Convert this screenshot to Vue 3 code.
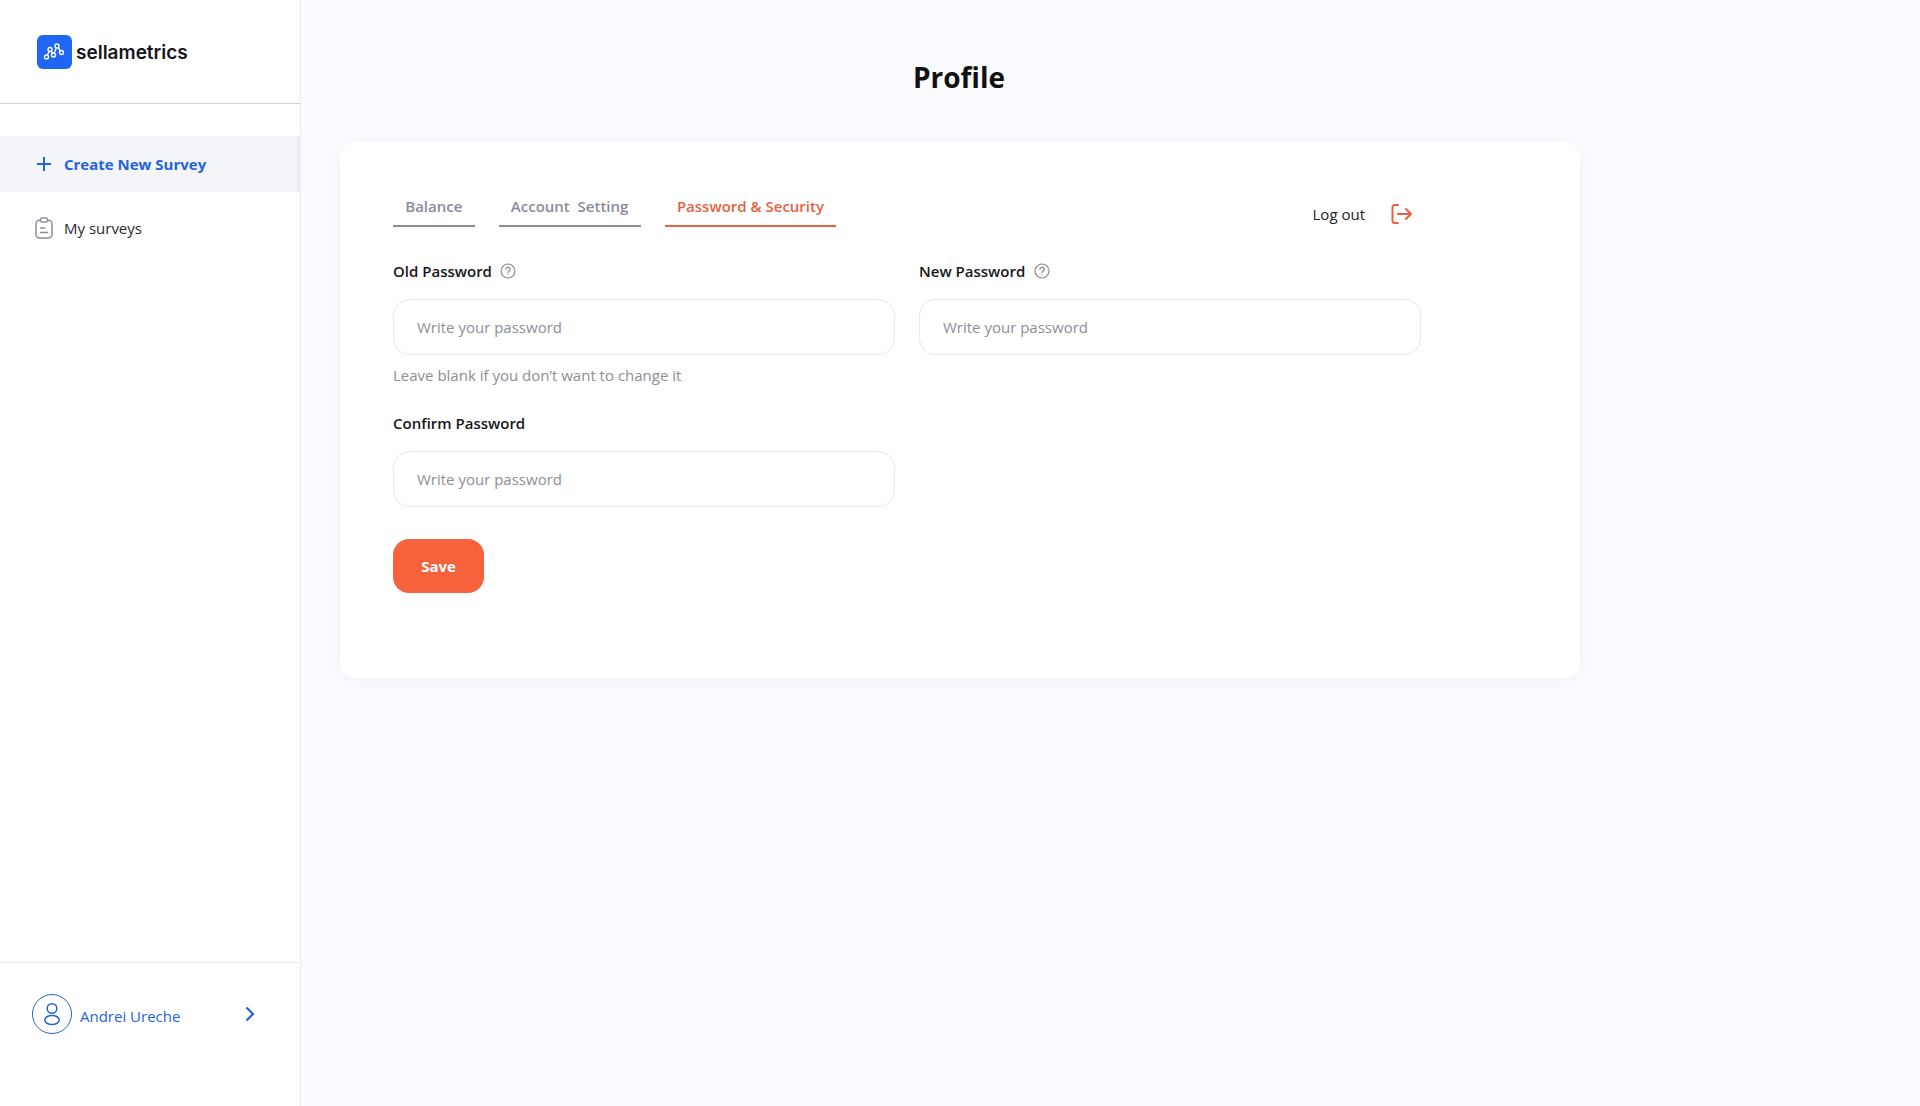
<template>
  <div class="layout">
    <aside class="sidebar">
      <div class="brand">
        <span class="brand-mark">
          <svg width="24" height="20" viewBox="0 0 24 20" fill="none" stroke="#fff" stroke-width="1.4">
            <path d="M3.500 15 7 7.500l3.500 5.500L14 4l4.500 6.500" />
            <circle cx="3.500" cy="15" r="2" fill="#1f66f5" />
            <circle cx="7" cy="7.500" r="2" fill="#1f66f5" />
            <circle cx="10.500" cy="13" r="2" fill="#1f66f5" />
            <circle cx="14" cy="4" r="2" fill="#1f66f5" />
            <circle cx="18.500" cy="10.500" r="2" fill="#1f66f5" />
          </svg>
        </span>
        <span class="brand-name">sellametrics</span>
      </div>

      <nav class="nav">
        <a class="nav-item nav-item-active">
          <svg width="16" height="16" viewBox="0 0 16 16" fill="none" stroke="#2463de" stroke-width="2">
            <path d="M8 1v14M1 8h14" />
          </svg>
          Create New Survey
        </a>
        <a class="nav-item">
          <svg width="18" height="22" viewBox="0 0 18 22" fill="none" stroke="#8d8f9c" stroke-width="1.5" stroke-linecap="round">
            <rect x="1" y="3.200" width="16" height="17.800" rx="3.500" />
            <rect x="5.500" y="1" width="7" height="4" rx="1.600" fill="#fff" />
            <path d="M5.500 11h4M5.500 15.500h7" />
          </svg>
          My surveys
        </a>
      </nav>

      <div class="user">
        <span class="avatar">
          <svg width="18" height="24" viewBox="0 0 18 24" fill="none" stroke="#2463de" stroke-width="1.5">
            <circle cx="9" cy="6.500" r="4.800" />
            <ellipse cx="9" cy="18" rx="7.200" ry="4.600" />
          </svg>
        </span>
        <span class="user-name">Andrei Ureche</span>
        <svg class="user-arrow" width="10" height="16" viewBox="0 0 10 16" fill="none" stroke="#2463de" stroke-width="2.200">
          <path d="m1.500 1.500 6.500 6.500-6.500 6.500" />
        </svg>
      </div>
    </aside>

    <main class="main">
      <div class="content">
        <h1 class="title">Profile</h1>

        <section class="card">
          <div class="tabs-row">
            <div class="tabs">
              <a v-for="tab in tabs" :key="tab" class="tab" :class="{ 'tab-active': tab === activeTab }">{{ tab }}</a>
            </div>
            <a class="logout">
              Log out
              <svg width="22" height="20" viewBox="0 0 22 20" fill="none" stroke="#e8623f" stroke-width="2" stroke-linecap="round" stroke-linejoin="round">
                <path d="M7 1H3.500A2 2 0 0 0 1.500 3v14a2 2 0 0 0 2 2H7" />
                <path d="M7 10h13M15 5l5 5-5 5" />
              </svg>
            </a>
          </div>

          <div class="form">
            <div class="field">
              <label class="label">
                Old Password
                <svg class="help" width="16" height="16" viewBox="0 0 16 16" fill="none" stroke="#8a8a8f" stroke-width="1.200">
                  <circle cx="8" cy="8" r="7" />
                  <path d="M5.900 6.300a2.150 2.150 0 1 1 3.300 1.800c-.8.500-1.200.9-1.200 1.700" stroke-linecap="round" />
                  <circle cx="8" cy="11.800" r=".5" fill="#8a8a8f" stroke="none" />
                </svg>
              </label>
              <input class="input" type="password" placeholder="Write your password" />
              <p class="hint">Leave blank if you don’t want to change it</p>
            </div>
            <div class="field">
              <label class="label">
                New Password
                <svg class="help" width="16" height="16" viewBox="0 0 16 16" fill="none" stroke="#8a8a8f" stroke-width="1.200">
                  <circle cx="8" cy="8" r="7" />
                  <path d="M5.900 6.300a2.150 2.150 0 1 1 3.300 1.800c-.8.500-1.200.9-1.200 1.700" stroke-linecap="round" />
                  <circle cx="8" cy="11.800" r=".5" fill="#8a8a8f" stroke="none" />
                </svg>
              </label>
              <input class="input" type="password" placeholder="Write your password" />
            </div>
            <div class="field">
              <label class="label">Confirm Password</label>
              <input class="input" type="password" placeholder="Write your password" />
            </div>
          </div>

          <button class="save" type="button">Save</button>
        </section>
      </div>
    </main>
  </div>
</template>

<script setup>
const tabs = ["Balance", "Account\u00a0 Setting", "Password & Security"];
const activeTab = "Password & Security";
</script>

<style>
body { margin: 0; }
</style>

<style scoped>
.layout {
  display: flex;
  height: 1106px;
  overflow: hidden;
  background: #fbfbff;
  font-family: "Open Sans", sans-serif;
  color: #111;
}

.sidebar {
  width: 300px;
  flex-shrink: 0;
  display: flex;
  flex-direction: column;
  background: #fff;
  border-right: 1px solid #eeeef3;
}
.brand {
  height: 104px;
  box-sizing: border-box;
  padding: 0 0 0 37px;
  display: flex;
  align-items: center;
  gap: 4px;
  border-bottom: 1px solid #d0d0d6;
}
.brand-mark {
  width: 35px;
  height: 34px;
  border-radius: 6px;
  background: #1f66f5;
  display: flex;
  align-items: center;
  justify-content: center;
}
.brand-name {
  margin-top: 2px;
  font-family: Inter, sans-serif;
  font-size: 19px;
  font-weight: 600;
  color: #16161a;
}

.nav { margin-top: 32px; flex: 1; }
.nav-item {
  height: 56px;
  display: flex;
  align-items: center;
  gap: 11px;
  padding-left: 35px;
  font-size: 15px;
  color: #2a2a30;
  margin-bottom: 8px;
}
.nav-item svg { width: 18px; flex-shrink: 0; }
.nav-item-active {
  background: #f4f5f9;
  border-right: 3px solid #ececf1;
  color: #2463de;
  font-weight: 700;
}

.user {
  height: 144px;
  box-sizing: border-box;
  border-top: 1px solid #eaeaef;
  padding: 31px 0 0 32px;
  display: flex;
  align-items: flex-start;
  color: #2463de;
}
.avatar {
  width: 40px;
  height: 40px;
  box-sizing: border-box;
  border: 1px solid #2463de;
  border-radius: 50%;
  display: flex;
  align-items: center;
  justify-content: center;
}
.user-name {
  font-size: 15px;
  line-height: 20px;
  margin: 12px 0 0 8px;
}
.user-arrow { margin: 12px 0 0 65px; }

.main { flex: 1; min-width: 0; }
.content {
  width: 1240px;
  margin-left: 39px;
}
.title {
  margin: 0;
  padding: 57px 2px 0 0;
  text-align: center;
  font-size: 28px;
  line-height: 40px;
  font-weight: 700;
  color: #111;
}
.card {
  margin-top: 45px;
  height: 536px;
  box-sizing: border-box;
  padding: 51px 53px 0;
  background: #fff;
  border-radius: 16px;
  box-shadow: 0 2px 16px rgba(60, 60, 110, .06);
}

.tabs-row {
  width: 1028px;
  display: flex;
  justify-content: space-between;
}
.tabs { display: flex; gap: 24px; }
.tab {
  padding: 0 12.25px 8px;
  height: 24px;
  line-height: 26px;
  font-size: 15px;
  font-weight: 600;
  color: #8b8b9b;
  border-bottom: 2px solid #8b8b9b;
}
.tab-active { color: #e8623f; border-bottom-color: #e8623f; }
.logout {
  display: flex;
  align-items: center;
  gap: 26px;
  font-size: 15px;
  color: #222;
  padding-right: 8px;
  height: 24px;
  margin-top: 9px;
}

.form {
  margin-top: 32px;
  display: grid;
  grid-template-columns: 502px 502px;
  column-gap: 24px;
  row-gap: 24px;
  align-items: start;
}
.label {
  display: flex;
  align-items: center;
  gap: 8.5px;
  height: 24px;
  font-size: 15px;
  font-weight: 600;
  color: #16161a;
}
.input {
  display: block;
  width: 100%;
  height: 56px;
  margin-top: 16px;
  box-sizing: border-box;
  padding: 0 23px;
  border: 1px solid #e9e9ee;
  border-radius: 16px;
  background: #fff;
  font-family: inherit;
  font-size: 15px;
  outline: none;
}
.input::placeholder { color: #8e8e98; opacity: 1; }
.hint {
  margin: 8px 0 0;
  font-size: 15px;
  line-height: 24px;
  color: #8e8e93;
}

.save {
  margin-top: 32px;
  display: block;
  width: 91px;
  height: 54px;
  border: none;
  border-radius: 16px;
  background: #f6623c;
  color: #fff;
  font-family: inherit;
  font-size: 15px;
  font-weight: 700;
}
</style>
